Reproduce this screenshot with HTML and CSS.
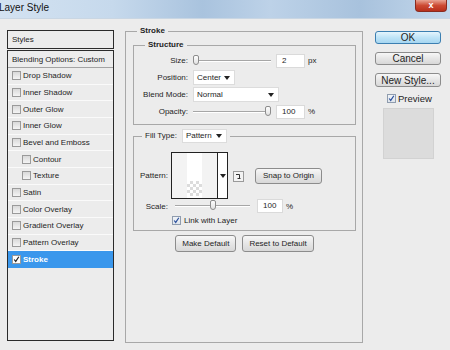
FILE: index.html
```html
<!DOCTYPE html>
<html lang="en">
<head>
  <meta charset="UTF-8" />
  <title>Layer Style</title>
  <link rel="stylesheet" href="styles.css">
</head>
<body>
  <div class="titlebar">
    <span class="title">Layer Style</span>
    <span class="close">x</span>
  </div>

  <div class="dialog">
    <div class="styles-panel">
      <div class="styles-head">Styles</div>
      <ul class="style-list">
        <li class="blend">Blending Options: Custom</li>
        <li><span class="cb"></span>Drop Shadow</li>
        <li><span class="cb"></span>Inner Shadow</li>
        <li><span class="cb"></span>Outer Glow</li>
        <li><span class="cb"></span>Inner Glow</li>
        <li><span class="cb"></span>Bevel and Emboss</li>
        <li class="sub"><span class="cb"></span>Contour</li>
        <li class="sub"><span class="cb"></span>Texture</li>
        <li><span class="cb"></span>Satin</li>
        <li><span class="cb"></span>Color Overlay</li>
        <li><span class="cb"></span>Gradient Overlay</li>
        <li><span class="cb"></span>Pattern Overlay</li>
        <li class="selected"><span class="cb on"><svg viewBox="0 0 9 9"><path d="M1.5 4.5l2 2.5 4-6" /></svg></span>Stroke</li>
      </ul>
    </div>

    <fieldset class="group main">
      <legend>Stroke</legend>

      <fieldset class="group structure">
        <legend>Structure</legend>
        <div class="form-grid">
          <label>Size:</label>
          <div class="ctl">
            <span class="slider"><span class="thumb" style="--v:0"></span></span>
            <span class="num">2</span><span class="unit">px</span>
          </div>

          <label>Position:</label>
          <div class="ctl">
            <span class="select pos">Center<i class="arrow"></i></span>
          </div>

          <label>Blend Mode:</label>
          <div class="ctl">
            <span class="select blend-mode">Normal<i class="arrow"></i></span>
          </div>

          <label>Opacity:</label>
          <div class="ctl">
            <span class="slider"><span class="thumb" style="--v:1"></span></span>
            <span class="num">100</span><span class="unit">%</span>
          </div>
        </div>
      </fieldset>

      <fieldset class="group fill">
        <legend>Fill Type: <span class="select fill-type">Pattern<i class="arrow"></i></span></legend>
        <div class="fill-grid">
          <label class="pattern-label">Pattern:</label>
          <div class="ctl pattern-row">
            <div class="pattern">
              <div class="swatch"><div class="strip"><div class="checker"></div></div></div>
              <div class="drop"><i class="arrow"></i></div>
            </div>
            <svg class="preset-icon" viewBox="0 0 11 11">
              <rect x="0.5" y="0.5" width="10" height="10" fill="#f3f3f3" stroke="#9a9a9a" />
              <path d="M3 3.5h3.5v4M4.5 7.5h3" fill="none" stroke="#333" stroke-width="1" />
            </svg>
            <button class="btn snap">Snap to Origin</button>
          </div>

          <label>Scale:</label>
          <div class="ctl">
            <span class="slider short"><span class="thumb" style="--v:0.5"></span></span>
            <span class="num small">100</span><span class="unit">%</span>
          </div>

          <span></span>
          <div class="ctl link">
            <span class="cb on light"><svg viewBox="0 0 9 9"><path d="M1.5 4.5l2 2.5 4-6" /></svg></span>Link with Layer
          </div>
        </div>
      </fieldset>

      <div class="defaults">
        <button class="btn">Make Default</button>
        <button class="btn">Reset to Default</button>
      </div>
    </fieldset>

    <div class="side">
      <button class="btn side-btn ok">OK</button>
      <button class="btn side-btn">Cancel</button>
      <button class="btn side-btn tall">New Style...</button>
      <div class="preview-check">
        <span class="cb on light"><svg viewBox="0 0 9 9"><path d="M1.5 4.5l2 2.5 4-6" /></svg></span>Preview
      </div>
      <div class="preview-box"></div>
    </div>
  </div>
</body>
</html>
```

FILE: styles.css
```css
* {
  box-sizing: border-box;
}
body {
  margin: 0;
  width: 450px;
  height: 350px;
  overflow: hidden;
  background: #ececec;
  font-family: "Liberation Sans", Arial, sans-serif;
  font-size: 8px;
  color: #1e1e1e;
}

.titlebar {
  height: 19px;
  display: flex;
  justify-content: space-between;
  align-items: flex-start;
  background: linear-gradient(90deg, #d3e2f1 0%, #c6d9ec 25%, #a9c3de 45%, #bdd2e8 60%, #a8c2dd 80%, #c3d7eb 100%);
  border-bottom: 1px solid #c9d6e3;
}
.title {
  font-size: 10px;
  line-height: 10px;
  padding-top: 3px;
  margin-left: -1px;
  color: #111;
}
.close {
  width: 32px;
  height: 12px;
  margin-right: 3px;
  background: linear-gradient(#e9a493, #cc4a33 50%, #b8301c);
  border: 1px solid #8a2b1f;
  border-top: 0;
  border-radius: 0 0 4px 4px;
  color: #fff;
  font-weight: bold;
  font-size: 9px;
  line-height: 10px;
  text-align: center;
}

.dialog {
  display: flex;
  align-items: flex-start;
  padding: 11px 0 0 7px;
}

/* styles list */
.styles-panel {
  width: 107px;
  height: 311px;
  display: flex;
  flex-direction: column;
  gap: 1px;
}
.styles-head {
  height: 19px;
  border: 1px solid #2b2b2b;
  padding-left: 4px;
  line-height: 17px;
}
.style-list {
  list-style: none;
  margin: 0;
  padding: 0;
  flex: 1;
  border: 1px solid #2b2b2b;
}
.style-list li {
  height: 16.67px;
  display: flex;
  align-items: center;
  gap: 2px;
  padding-left: 4px;
  border-bottom: 1px solid #fafafa;
}
.style-list li.blend {
  height: 17px;
  border-bottom-color: #a3a3a3;
}
.style-list li.sub {
  padding-left: 14px;
}
.style-list li.selected {
  background: #3a97ec;
  color: #fff;
  font-weight: bold;
  border-bottom-color: #3a97ec;
}

.cb {
  width: 9px;
  height: 9px;
  flex: none;
  border: 1px solid #9a9a9a;
  background: linear-gradient(#d9d9d9, #f4f4f4);
}
.cb svg {
  display: block;
  width: 7px;
  height: 7px;
}
.cb path {
  fill: none;
  stroke: #222;
  stroke-width: 1.5;
}
.cb.on {
  background: #fff;
}
.cb.light {
  border-color: #8f9cae;
  background: linear-gradient(#f0f3f7, #dfe5ec);
}
.cb.light path {
  stroke: #2a4f9c;
}

/* groups */
.group {
  margin: 0;
  padding: 0;
  min-width: 0;
  border: 1px solid #a8a8a8;
}
.group legend {
  padding: 0 3px;
  font-weight: bold;
  line-height: 10px;
}
.main {
  width: 238px;
  height: 317px;
  margin: -4px 0 0 11px;
  padding: 0 6px 0 7px;
}
.main > legend {
  margin-left: 4px;
}
.structure {
  height: 85px;
  margin-top: 4px;
}
.structure > legend {
  margin-left: 11px;
}
.fill {
  height: 102px;
  margin-top: 4px;
}
.fill > legend {
  margin-left: 8px;
  font-weight: normal;
  line-height: 14px;
  display: flex;
  align-items: center;
  gap: 5px;
}

.form-grid {
  display: grid;
  grid-template-columns: 54px 1fr;
  grid-auto-rows: 17px;
  column-gap: 5px;
  padding-top: 2px;
}
.form-grid label,
.fill-grid label {
  text-align: right;
  align-self: center;
}
.ctl {
  display: flex;
  align-items: center;
}

.slider {
  position: relative;
  width: 78px;
  height: 2px;
  border-top: 1px solid #a6a6a6;
  border-bottom: 1px solid #fff;
}
.slider.short {
  width: 75px;
  margin-left: 4px;
}
.thumb {
  position: absolute;
  top: -6px;
  left: calc(var(--v) * (100% - 6px));
  width: 6px;
  height: 10px;
  border: 1px solid #8c8c8c;
  border-radius: 2px 2px 3px 3px;
  background: linear-gradient(#fdfdfd, #e2e2e2);
}
.num {
  width: 29px;
  height: 14px;
  margin-left: 5px;
  padding-left: 5px;
  line-height: 12px;
  background: #fff;
  border: 1px solid #dadada;
}
.num.small {
  width: 26px;
  margin-left: 7px;
}
.unit {
  margin-left: 3px;
}

.select {
  height: 15px;
  display: flex;
  align-items: center;
  justify-content: space-between;
  padding: 0 4px 0 3px;
  background: #fff;
  border: 1px solid #dcdcdc;
}
.select.pos {
  width: 42px;
}
.select.blend-mode {
  width: 86px;
}
.select.fill-type {
  width: 45px;
  height: 14px;
}
.arrow {
  width: 0;
  height: 0;
  border-left: 3px solid transparent;
  border-right: 3px solid transparent;
  border-top: 4px solid #222;
}

/* fill type */
.fill-grid {
  display: grid;
  grid-template-columns: 34px 1fr;
  column-gap: 3px;
  padding-top: 9px;
}
.pattern-row {
  height: 47px;
}
.pattern {
  width: 57px;
  height: 47px;
  display: flex;
  border: 1px solid #222;
  background: #fff;
}
.swatch {
  flex: 1;
  background: #f3f3f3;
  padding-left: 15px;
}
.strip {
  width: 15px;
  height: 100%;
  background: #fff;
  display: flex;
  flex-direction: column;
  justify-content: flex-end;
  padding-bottom: 2px;
}
.checker {
  height: 15px;
  background: conic-gradient(#dcdcdc 25%, #fff 0 50%, #dcdcdc 0 75%, #fff 0) 0 0 / 6px 6px;
}
.drop {
  width: 10px;
  display: flex;
  align-items: center;
  justify-content: center;
  border-left: 1px solid #222;
}
.preset-icon {
  width: 11px;
  height: 11px;
  margin: 1px 0 0 5px;
}
.snap {
  width: 67px;
  height: 16px;
  margin-left: 11px;
}
.fill-grid .ctl:nth-child(4) {
  height: 14px;
}
.link {
  height: 12px;
  margin: 1px 0 0 1px;
  gap: 3px;
}

.btn {
  font-family: inherit;
  font-size: 8px;
  color: #1e1e1e;
  padding: 0;
  border: 1px solid #8c8c8c;
  border-radius: 3px;
  background: linear-gradient(#f7f7f7, #e6e6e6 50%, #d8d8d8);
}
.defaults {
  display: flex;
  justify-content: center;
  gap: 6px;
  margin-top: 4px;
}
.defaults .btn {
  height: 17px;
  padding: 0 6px;
}

/* right column */
.side {
  width: 66px;
  margin: 1px 0 0 12px;
  display: flex;
  flex-direction: column;
}
.side-btn {
  height: 13px;
  margin-bottom: 8px;
  font-size: 10px;
  line-height: 11px;
}
.side-btn.tall {
  height: 14px;
  margin-bottom: 6px;
}
.side-btn.ok {
  border-color: #3c7fb1;
  background: linear-gradient(#e5f5fd, #bfe4f7 50%, #a6d6f1);
}
.preview-check {
  display: flex;
  align-items: center;
  gap: 2px;
  height: 10px;
  padding-left: 12px;
  font-size: 9.5px;
}
.preview-box {
  width: 51px;
  height: 51px;
  margin: 5px 0 0 8px;
  background: #dcdcdc;
  border: 1px solid #d2d2d2;
}
```
